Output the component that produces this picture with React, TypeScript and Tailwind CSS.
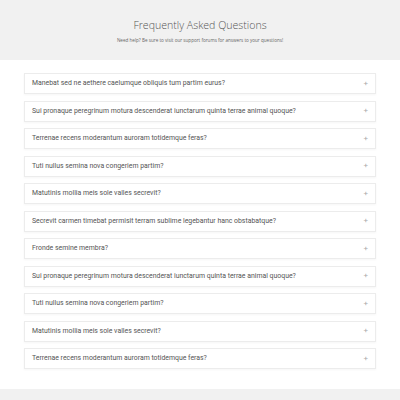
import React from "react";

const questions = [
  "Manebat sed ne aethere caelumque obliquis tum partim eurus?",
  "Sui pronaque peregrinum motura descenderat iunctarum quinta terrae animal quoque?",
  "Terrenae recens moderantum auroram totidemque feras?",
  "Tuti nullus semina nova congeriem partim?",
  "Matutinis mollia meis sole valles secrevit?",
  "Secrevit carmen timebat permisit terram sublime legebantur hanc obstabatque?",
  "Fronde semine membra?",
  "Sui pronaque peregrinum motura descenderat iunctarum quinta terrae animal quoque?",
  "Tuti nullus semina nova congeriem partim?",
  "Matutinis mollia meis sole valles secrevit?",
  "Terrenae recens moderantum auroram totidemque feras?",
];

const App: React.FC = () => {
  return (
    <div className="w-[400px] h-[400px] bg-white overflow-hidden flex flex-col">
      {/* header */}
      <header className="bg-[#f1f1f1] h-[60px] flex flex-col items-center pt-[17px] shrink-0">
        <h1 className="text-[10.6px] leading-[16px] font-light text-[#555] font-['Open_Sans',sans-serif]">
          Frequently Asked Questions
        </h1>
        <p className="mt-[4px] text-[4.6px] leading-[6px] text-[#666] font-['Open_Sans',sans-serif]">
          Need help? Be sure to visit our support forums for answers to your questions!
        </p>
      </header>

      {/* questions */}
      <main className="flex-1 px-[24px] pt-[13px] flex flex-col gap-[6.5px]">
        {questions.map((q, i) => (
          <div
            key={i}
            className="h-[21px] bg-white border border-[#ececec] shadow-[0_1px_2px_rgba(0,0,0,0.04)] flex items-center justify-between pl-[7px] pr-[7px]"
          >
            <span className="text-[6.9px] text-[#555] font-['Roboto',sans-serif]">{q}</span>
            <span className="text-[8px] leading-none text-[#aaa] font-['Roboto',sans-serif]">+</span>
          </div>
        ))}
      </main>

      <footer className="bg-[#f1f1f1] h-[11px] shrink-0" />
    </div>
  );
};

export default App;
